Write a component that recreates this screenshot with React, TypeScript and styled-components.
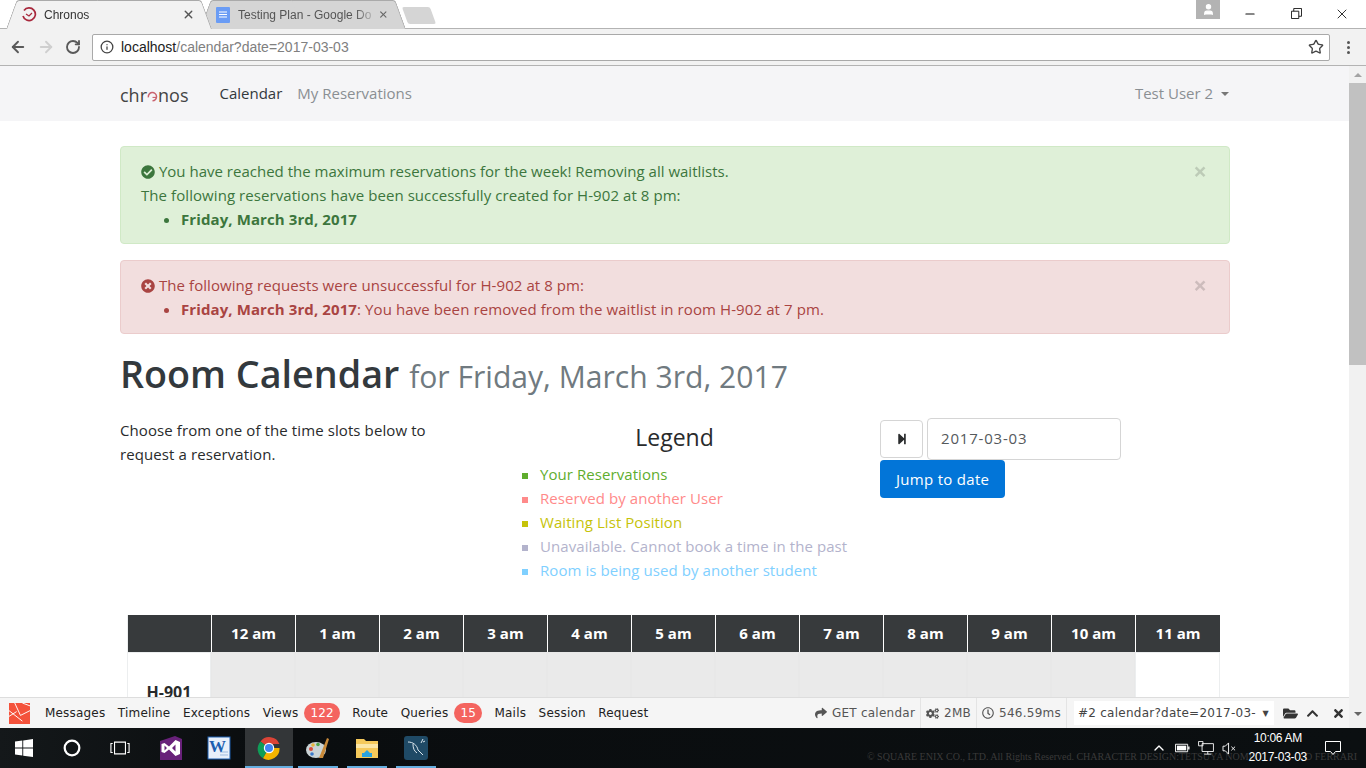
import styled, { createGlobalStyle } from 'styled-components';
import {
  ArrowLeft,
  ArrowRight,
  RotateCw,
  Info,
  Star,
  X,
  Minus,
  User,
  ChevronUp,
} from 'lucide-react';
import {
  FaCheckCircle,
  FaTimesCircle,
  FaStepForward,
  FaShare,
  FaCogs,
  FaRegClock,
  FaFolderOpen,
  FaChevronUp,
  FaTimes,
} from 'react-icons/fa';

const Global = createGlobalStyle`
  html, body { margin: 0; padding: 0; height: 100%; overflow: hidden; }
  body { font-family: "Open Sans", sans-serif; color: #292b2c; background: #fff; }
  * { box-sizing: border-box; }
`;

const hours = ['12 am', '1 am', '2 am', '3 am', '4 am', '5 am', '6 am', '7 am', '8 am', '9 am', '10 am', '11 am'];
const legend = [
  { label: 'Your Reservations', color: '#5fad2e' },
  { label: 'Reserved by another User', color: '#ff8a8a' },
  { label: 'Waiting List Position', color: '#c6c30a' },
  { label: 'Unavailable. Cannot book a time in the past', color: '#b3b3cc' },
  { label: 'Room is being used by another student', color: '#80d0ff' },
];

const App = () => (
  <Screen>
    <Global />
    <TabStrip>
      <Tab $active>
        <TabIcon viewBox="0 0 16 16">
          <path d="M3 3.500A6.300 6.300 0 1 1 2 9" fill="none" stroke="#a8283c" strokeWidth="1.700" />
          <path d="M5 7l3 2 3-3" fill="none" stroke="#a8283c" strokeWidth="1.200" />
        </TabIcon>
        <TabTitle>Chronos</TabTitle>
        <X size={13} color="#555" strokeWidth={2.5} />
      </Tab>
      <Tab>
        <TabIcon viewBox="0 0 16 16">
          <rect x="1" y="0" width="14" height="16" rx="1" fill="#6a9cf5" />
          <path d="M4 5h8M4 7.500h8M4 10h8" stroke="#fff" />
        </TabIcon>
        <TabTitle $dim>Testing Plan - Google Do</TabTitle>
        <X size={13} color="#666" strokeWidth={2.5} />
      </Tab>
      <NewTab />
      <WindowControls>
        <Profile><User size={13} color="#fff" fill="#fff" /></Profile>
        <WindowButton><Minus size={14} color="#111" /></WindowButton>
        <WindowButton><RestoreIcon viewBox="0 0 12 12"><path d="M.500 3.500h8v8h-8zM3 3.500V.500h8.500V9H8.500" fill="none" stroke="#111" /></RestoreIcon></WindowButton>
        <WindowButton><X size={16} color="#111" strokeWidth={1.300} /></WindowButton>
      </WindowControls>
    </TabStrip>
    <Toolbar>
      <ArrowLeft size={18} color="#5a5a5a" strokeWidth={2.500} />
      <ArrowRight size={18} color="#cfcfcf" strokeWidth={2.500} />
      <RotateCw size={16} color="#5a5a5a" strokeWidth={2.800} />
      <Omnibox>
        <Info size={14} color="#444" strokeWidth={2.200} />
        <Url><b>localhost</b>/calendar?date=2017-03-03</Url>
        <Star size={16} color="#444" strokeWidth={2} />
      </Omnibox>
      <MenuDots><i /><i /><i /></MenuDots>
    </Toolbar>
    <Viewport>
      <Page>
        <Navbar>
          <Logo>chr<LogoO viewBox="0 0 12 12"><path d="M1.500 7A4.500 4.500 0 1 1 6 10.700" fill="none" stroke="#c9626f" strokeWidth="1.600" /><path d="M6 7h4" stroke="#c9626f" strokeWidth="1.200" /></LogoO>nos</Logo>
          <NavLink $active>Calendar</NavLink>
          <NavLink>My Reservations</NavLink>
          <UserMenu>Test User 2 <Caret /></UserMenu>
        </Navbar>
        <Container>
          <Alert $kind="success">
            <AlertClose>×</AlertClose>
            <AlertLine><FaCheckCircle size={14} /> You have reached the maximum reservations for the week! Removing all waitlists.</AlertLine>
            <AlertLine $wide>The following reservations have been successfully created for H-902 at 8 pm:</AlertLine>
            <AlertList><li><b>Friday, March 3rd, 2017</b></li></AlertList>
          </Alert>
          <Alert $kind="danger">
            <AlertClose>×</AlertClose>
            <AlertLine $wide><FaTimesCircle size={14} /> The following requests were unsuccessful for H-902 at 8 pm:</AlertLine>
            <AlertList><li><b>Friday, March 3rd, 2017</b>: You have been removed from the waitlist in room H-902 at 7 pm.</li></AlertList>
          </Alert>
          <Heading>Room Calendar <small>for Friday, March 3rd, 2017</small></Heading>
          <Intro>
            <IntroText>Choose from one of the time slots below to request a reservation.</IntroText>
            <LegendBox>
              <LegendTitle>Legend</LegendTitle>
              {legend.map(item => (
                <LegendRow key={item.label} $color={item.color}>{item.label}</LegendRow>
              ))}
            </LegendBox>
            <DateBox>
              <DateRow>
                <IconButton><FaStepForward size={12} color="#292b2c" /></IconButton>
                <DateInput>2017-03-03</DateInput>
              </DateRow>
              <JumpButton>Jump to date</JumpButton>
            </DateBox>
          </Intro>
          <Table>
            <HeadCell />
            {hours.map(h => <HeadCell key={h}>{h}</HeadCell>)}
            <RoomCell>H-901</RoomCell>
            {hours.map(h => <SlotCell key={h} $free={h === '11 am'} />)}
          </Table>
        </Container>
      </Page>
      <ScrollBar>
        <ScrollArrow />
        <ScrollThumb />
        <ScrollArrow $down />
      </ScrollBar>
      <DebugBar>
        <DebugLogo viewBox="0 0 22 22">
          <rect x="0" y="0" width="22" height="22" fill="#f4523b" />
          <path d="M0 8l14 11M6 0l6 13 10-5M0 14l8-5M14 0l8 3" stroke="#fff" strokeWidth="1" fill="none" />
        </DebugLogo>
        <DebugItem>Messages</DebugItem>
        <DebugItem>Timeline</DebugItem>
        <DebugItem>Exceptions</DebugItem>
        <DebugItem>Views <Badge>122</Badge></DebugItem>
        <DebugItem>Route</DebugItem>
        <DebugItem>Queries <Badge>15</Badge></DebugItem>
        <DebugItem>Mails</DebugItem>
        <DebugItem>Session</DebugItem>
        <DebugItem>Request</DebugItem>
        <DebugRight>
          <DebugStat><FaShare size={12} /> GET calendar</DebugStat>
          <DebugStat><FaCogs size={13} /> 2MB</DebugStat>
          <DebugStat><FaRegClock size={12} /> 546.59ms</DebugStat>
          <DebugSelect>#2 calendar?date=2017-03-<SelectArrow>▼</SelectArrow></DebugSelect>
          <DebugActions>
            <FaFolderOpen size={15} />
            <FaChevronUp size={13} />
            <FaTimes size={13} />
          </DebugActions>
        </DebugRight>
      </DebugBar>
    </Viewport>
    <Taskbar>
      <TaskIcon>
        <TaskSvg viewBox="0 0 16 16"><path d="M0 2.300l6.500-.9v6.200H0zM7.300 1.300L16 0v7.600H7.300zM0 8.400h6.500v6.200L0 13.700zM7.300 8.400H16V16l-8.700-1.200z" fill="#fff" /></TaskSvg>
      </TaskIcon>
      <TaskIcon>
        <TaskSvg viewBox="0 0 16 16"><circle cx="8" cy="8" r="6.500" fill="none" stroke="#fff" strokeWidth="2" /></TaskSvg>
      </TaskIcon>
      <TaskIcon>
        <TaskSvg $size={20} viewBox="0 0 22 16"><path d="M5 1.500h12v13H5zM3 3H1v10h2M19 3h2v10h-2" fill="none" stroke="#fff" strokeWidth="1.200" /></TaskSvg>
      </TaskIcon>
      <TaskIcon $offset={3}>
        <TaskSvg $size={24} viewBox="0 0 22 24">
          <path d="M0 5l15-5 7 3v21H0z" fill="#68217a" />
          <path d="M1.500 8l3-1 4.500 3.500L15.500 4 20 6v12l-4.500 2L9 13.500 4.500 17l-3-1zM4.500 9.500v5L7 12zM15.500 8.500L12 12l3.500 3.500z" fill="#fff" fillRule="evenodd" />
        </TaskSvg>
      </TaskIcon>
      <TaskIcon>
        <TaskSvg $size={24} viewBox="0 0 24 24">
          <rect x="1" y="1" width="22" height="22" fill="#e8f0fa" stroke="#1c5fb0" />
          <path d="M13 16h8M13 19h8" stroke="#9fbbdf" />
          <text x="2" y="16" fontFamily="Liberation Serif, serif" fontSize="17" fontWeight="700" fill="#1c5fb0">W</text>
        </TaskSvg>
      </TaskIcon>
      <TaskIcon $offset={2} $active $running>
        <TaskSvg $size={24} viewBox="0 0 24 24">
          <path d="M12 12L3.500 5.500A11 11 0 0 1 22.500 8H12z" fill="#db4437" />
          <path d="M12 12l-6 10.300A11 11 0 0 1 3.500 5.500z" fill="#0f9d58" />
          <path d="M12 12h10.500A11 11 0 0 1 6 22.300z" fill="#f4b400" />
          <circle cx="12" cy="12" r="5.200" fill="#fff" />
          <circle cx="12" cy="12" r="4" fill="#4285f4" />
        </TaskSvg>
      </TaskIcon>
      <TaskIcon $offset={1} $running>
        <TaskSvg $size={26} viewBox="0 0 26 26">
          <ellipse cx="11" cy="15" rx="10" ry="8" fill="#c9d3d6" />
          <circle cx="6" cy="14" r="2" fill="#d64b3a" />
          <circle cx="8" cy="10" r="1.800" fill="#e8b53a" />
          <circle cx="13" cy="9.500" r="1.800" fill="#4fa34a" />
          <circle cx="7" cy="19" r="1.800" fill="#3a78c9" />
          <path d="M14 23L22 3l2 1-6 19z" fill="#c98a3a" />
        </TaskSvg>
      </TaskIcon>
      <TaskIcon $offset={1} $running>
        <TaskSvg $size={24} viewBox="0 0 24 24">
          <path d="M1 3h8l2 2h12v17H1z" fill="#f5c95b" />
          <path d="M1 8h22v4H1z" fill="#fbe6a6" />
          <path d="M7 21v-4h10v4z" fill="#29a3e0" />
          <path d="M9 17l3-3 3 3z" fill="#29a3e0" />
        </TaskSvg>
      </TaskIcon>
      <TaskIcon $offset={1} $running>
        <TaskSvg $size={24} viewBox="0 0 24 24">
          <rect x="0" y="0" width="24" height="24" rx="3" fill="#1f4a66" />
          <path d="M4 6c5 0 9 3 10 8l5 5M9 8c0 4 1 7 4 9M19 3l-2 4M21 5l-2 1" fill="none" stroke="#dbe7ee" strokeWidth="1" />
        </TaskSvg>
      </TaskIcon>
      <Wallpaper>
        <span>© SQUARE ENIX CO., LTD. All Rights Reserved. CHARACTER DESIGN:TETSUYA NOMU</span>
        <span>O FERRARI</span>
      </Wallpaper>
      <Tray>
        <ChevronUp size={16} color="#fff" />
        <BatteryIcon viewBox="0 0 16 10"><path d="M.500 1h13v8H.500z" fill="none" stroke="#fff" /><path d="M2 2.500h10v5H2z" fill="#fff" /><path d="M14 3.500h1.500v3H14z" fill="#fff" /></BatteryIcon>
        <NetworkIcon viewBox="0 0 18 16"><path d="M4.500 3h13v9h-13zM11 12v3M7 15h8M.500.500h5v5h-5z" fill="#0b0e10" stroke="#fff" /></NetworkIcon>
        <VolumeIcon viewBox="0 0 16 14"><path d="M1 4.500h2.500L7 1v12L3.500 9.500H1zM10 5l4 4M14 5l-4 4" fill="none" stroke="#fff" /></VolumeIcon>
        <Clock>10:06 AM<br />2017-03-03</Clock>
        <NotifyIcon viewBox="0 0 16 15"><path d="M.500.500h15v10h-5l-2.500 3-2.500-3h-5z" fill="none" stroke="#fff" /></NotifyIcon>
      </Tray>
    </Taskbar>
  </Screen>
);

const Screen = styled.div`
  width: 1366px;
  height: 768px;
  display: flex;
  flex-direction: column;
  overflow: hidden;
`;

const TabStrip = styled.div`
  height: 29px;
  flex: none;
  background: #fff;
  border-bottom: 1px solid #b3b3b3;
  display: flex;
  padding-left: 6px;
`;

const Tab = styled.div<{ $active?: boolean }>`
  position: relative;
  width: 206px;
  height: 29px;
  margin-right: -12px;
  display: flex;
  align-items: center;
  gap: 7px;
  padding: 0 17px 0 15px;
  z-index: ${p => (p.$active ? 2 : 1)};
  &::before,
  &::after {
    content: '';
    position: absolute;
    top: 0;
    bottom: 0;
    width: 50%;
    z-index: -1;
    background: ${p => (p.$active ? '#f2f2f2' : '#d5d5d5')};
    border: 1px solid #aaaaaa;
    border-bottom: none;
  }
  &::before {
    left: 0;
    border-right: none;
    border-radius: 3px 0 0 0;
    transform: skewX(-20deg);
    transform-origin: bottom left;
  }
  &::after {
    right: 0;
    border-left: none;
    border-radius: 0 3px 0 0;
    transform: skewX(20deg);
    transform-origin: bottom right;
  }
`;

const TabIcon = styled.svg`
  width: 16px;
  height: 16px;
  flex: none;
`;

const TabTitle = styled.span<{ $dim?: boolean }>`
  flex: 1;
  font: 12px "Liberation Sans", sans-serif;
  color: ${p => (p.$dim ? '#555' : '#333')};
  white-space: nowrap;
  mask-image: linear-gradient(90deg, #000 88%, rgba(0, 0, 0, 0.3));
`;

const NewTab = styled.div`
  width: 28px;
  height: 17px;
  margin: 7px 0 0 11px;
  background: #d5d5d5;
  border-radius: 2px;
  transform: skewX(20deg);
`;

const WindowControls = styled.div`
  margin-left: auto;
  padding-right: 1px;
  display: flex;
  align-items: flex-start;
`;

const Profile = styled.div`
  width: 24px;
  height: 19px;
  margin-right: 7px;
  background: #b3b3b3;
  display: flex;
  align-items: center;
  justify-content: center;
`;

const WindowButton = styled.div`
  width: 46px;
  height: 27px;
  display: flex;
  align-items: center;
  justify-content: center;
`;

const RestoreIcon = styled.svg`
  width: 11px;
  height: 11px;
`;

const Toolbar = styled.div`
  height: 37px;
  flex: none;
  background: #f2f2f2;
  border-bottom: 1px solid #b3b3b3;
  display: flex;
  align-items: center;
  gap: 10px;
  padding: 0 9px;
`;

const Omnibox = styled.div`
  width: 1238px;
  height: 27px;
  margin-left: 1px;
  background: #fff;
  border: 1px solid #a9a9a9;
  border-radius: 2px;
  display: flex;
  align-items: center;
  gap: 7px;
  padding: 0 5px 0 7px;
`;

const Url = styled.span`
  flex: 1;
  font: 14px "Liberation Sans", sans-serif;
  color: #808080;
  b { font-weight: 400; color: #222; }
`;

const MenuDots = styled.div`
  display: flex;
  flex-direction: column;
  gap: 2px;
  margin-left: 7px;
  i { width: 3px; height: 3px; border-radius: 50%; background: #555; }
`;

const Viewport = styled.div`
  flex: 1;
  min-height: 0;
  position: relative;
  display: flex;
`;

const Page = styled.div`
  flex: 1;
  min-width: 0;
  overflow: hidden;
`;

const Navbar = styled.nav`
  height: 55px;
  background: #f5f5f7;
  display: flex;
  align-items: center;
  padding: 0 120px 2px 120px;
  gap: 15px;
`;

const Logo = styled.div`
  display: flex;
  align-items: center;
  font: 18px "Open Sans", sans-serif;
  color: #444;
  margin: 5px 16px 0 0;
`;

const LogoO = styled.svg`
  width: 11px;
  height: 11px;
  margin: 3px 0 0;
`;

const NavLink = styled.span<{ $active?: boolean }>`
  font-size: 15px;
  color: ${p => (p.$active ? '#33393d' : '#8a8f93')};
`;

const UserMenu = styled.span`
  margin-left: auto;
  font-size: 15px;
  color: #8a8f93;
`;

const Caret = styled.i`
  display: inline-block;
  margin-left: 4px;
  vertical-align: middle;
  border-top: 4px solid #777;
  border-left: 4px solid transparent;
  border-right: 4px solid transparent;
`;

const Container = styled.div`
  width: 1110px;
  margin-left: 120px;
  padding-top: 25px;
`;

const Alert = styled.div<{ $kind: 'success' | 'danger' }>`
  position: relative;
  padding: 12px 20px;
  margin-bottom: 16px;
  font-size: 15px;
  line-height: 24px;
  border-radius: 4px;
  border: 1px solid ${p => (p.$kind === 'success' ? '#d0e9c6' : '#ebcccc')};
  background: ${p => (p.$kind === 'success' ? '#dff0d8' : '#f2dede')};
  color: ${p => (p.$kind === 'success' ? '#3c763d' : '#a94442')};
`;

const AlertClose = styled.span`
  position: absolute;
  right: 22px;
  top: 12px;
  font-size: 24px;
  font-weight: 700;
  color: #000;
  opacity: 0.15;
`;

const AlertLine = styled.div<{ $wide?: boolean }>`
  letter-spacing: ${p => (p.$wide ? '0.07px' : '0.01px')};
  svg { vertical-align: -2px; }
`;

const AlertList = styled.ul`
  margin: 0;
  padding-left: 40px;
  letter-spacing: 0.1px;
`;

const Heading = styled.h1`
  margin: 15px 0 17px;
  font-size: 37.7px;
  font-weight: 600;
  line-height: 48px;
  color: #33393d;
  small { font-size: 30.1px; font-weight: 400; color: #707a80; }
`;

const Intro = styled.div`
  display: flex;
`;

const IntroText = styled.p`
  width: 340px;
  margin: 0;
  font-size: 15px;
  line-height: 24px;
  letter-spacing: 0.1px;
`;

const LegendBox = styled.div`
  width: 420px;
  padding: 4px 53px 0 62px;
`;

const LegendTitle = styled.div`
  font-size: 23px;
  line-height: 30px;
  text-align: center;
  margin-bottom: 10px;
`;

const LegendRow = styled.div<{ $color: string }>`
  font-size: 15px;
  line-height: 24px;
  letter-spacing: 0.07px;
  white-space: nowrap;
  color: ${p => p.$color};
  &::before {
    content: '';
    display: inline-block;
    width: 6px;
    height: 6px;
    margin-right: 12px;
    vertical-align: middle;
    background: ${p => p.$color};
  }
`;

const DateBox = styled.div``;

const DateRow = styled.div`
  display: flex;
  gap: 4px;
`;

const IconButton = styled.div`
  width: 43px;
  height: 38px;
  margin-top: 2px;
  border: 1px solid #d5d5d5;
  border-radius: 4px;
  display: flex;
  align-items: center;
  justify-content: center;
`;

const DateInput = styled.div`
  width: 194px;
  height: 42px;
  border: 1px solid #d5d5d5;
  border-radius: 4px;
  padding: 9px 13px;
  font-size: 15px;
  letter-spacing: 0.8px;
  color: #55595c;
`;

const JumpButton = styled.div`
  display: inline-block;
  background: #0275d8;
  color: #fff;
  font-size: 15px;
  line-height: 20px;
  letter-spacing: 0.3px;
  padding: 9px 16px;
  border-radius: 4px;
`;

const Table = styled.div`
  margin: 33px 0 0 7px;
  display: grid;
  grid-template-columns: repeat(12, 84px) 85px;
  width: 1093px;
`;

const HeadCell = styled.div`
  height: 37px;
  padding-bottom: 1px;
  background: #373a3c;
  color: #fff;
  font-size: 15px;
  font-weight: 700;
  display: flex;
  align-items: center;
  justify-content: center;
  border-left: 1px solid #fff;
  &:first-child { border-left-color: #eceeef; }
`;

const RoomCell = styled.div`
  height: 80px;
  font-size: 16px;
  font-weight: 700;
  padding-top: 28px;
  text-align: center;
  border: 1px solid #eceeef;
`;

const SlotCell = styled.div<{ $free?: boolean }>`
  height: 80px;
  background: ${p => (p.$free ? '#fff' : '#eaeaea')};
  border: 1px solid ${p => (p.$free ? '#eceeef' : '#e8e8e8')};
`;

const ScrollBar = styled.div`
  width: 17px;
  flex: none;
  background: #f1f1f1;
  display: flex;
  flex-direction: column;
`;

const ScrollArrow = styled.div<{ $down?: boolean }>`
  height: 17px;
  flex: none;
  margin-top: ${p => (p.$down ? 'auto' : '0')};
  margin-bottom: ${p => (p.$down ? '6px' : '0')};
  display: flex;
  align-items: center;
  justify-content: center;
  &::before {
    content: '';
    border-left: 4px solid transparent;
    border-right: 4px solid transparent;
    ${p => (p.$down ? 'border-top: 4px solid #666;' : 'border-bottom: 4px solid #a3a3a3;')}
  }
`;

const ScrollThumb = styled.div`
  height: 282px;
  background: #c1c1c1;
`;

const DebugBar = styled.div`
  position: absolute;
  left: 0;
  width: 1349px;
  bottom: 0;
  height: 31px;
  background: #f5f5f5;
  border-top: 1px solid #ddd;
  display: flex;
  align-items: center;
  gap: 12.45px;
  padding-left: 9px;
  font: 12px "DejaVu Sans", sans-serif;
  letter-spacing: 0.2px;
`;

const DebugLogo = styled.svg`
  width: 21px;
  height: 21px;
  margin-right: 2.5px;
`;

const DebugItem = styled.span`
  color: #222;
`;

const Badge = styled.span`
  display: inline-block;
  background: #f4645f;
  color: #fff;
  border-radius: 11px;
  padding: 3px 6px;
  margin-left: 2px;
`;

const DebugRight = styled.div`
  margin-left: auto;
  height: 100%;
  display: flex;
  align-items: center;
  letter-spacing: 0.25px;
`;

const DebugStat = styled.span`
  display: flex;
  align-items: center;
  gap: 5px;
  height: 100%;
  padding: 0 5px;
  color: #555;
  border-right: 1px solid #e4e4e4;
`;

const DebugSelect = styled.span`
  width: 200px;
  display: flex;
  justify-content: space-between;
  align-items: center;
  background: #fff;
  padding: 5px 5px 5px 4px;
  margin-left: 7px;
  white-space: nowrap;
  color: #444;
`;

const SelectArrow = styled.span`
  font-size: 8px;
`;

const DebugActions = styled.div`
  display: flex;
  align-items: center;
  gap: 8px;
  padding: 0 4px 0 9px;
  color: #333;
  svg:last-child { margin-left: 5px; }
`;

const Taskbar = styled.div`
  height: 40px;
  flex: none;
  background: linear-gradient(90deg, #14181a 0, #0a0d0f 260px, #0b0f11 100%);
  display: flex;
  position: relative;
`;

const TaskIcon = styled.div<{ $offset?: number; $active?: boolean; $running?: boolean }>`
  position: relative;
  width: 48px;
  height: 40px;
  margin-left: ${p => p.$offset ?? 0}px;
  display: flex;
  align-items: center;
  justify-content: center;
  background: ${p => (p.$active ? '#333638' : 'transparent')};
  &::after {
    content: '';
    display: ${p => (p.$running ? 'block' : 'none')};
    position: absolute;
    left: ${p => (p.$active ? 0 : 4)}px;
    right: ${p => (p.$active ? 0 : 4)}px;
    bottom: 0;
    height: 2px;
    background: #65aee0;
  }
`;

const TaskSvg = styled.svg<{ $size?: number }>`
  width: ${p => p.$size ?? 18}px;
  height: ${p => p.$size ?? 18}px;
`;

const Wallpaper = styled.div`
  position: absolute;
  left: 867px;
  width: 490px;
  bottom: 6px;
  display: flex;
  justify-content: space-between;
  font: 10px "Liberation Serif", serif;
  color: #3a3a3a;
  white-space: nowrap;
`;

const Tray = styled.div`
  position: absolute;
  right: 0;
  top: 0;
  bottom: 0;
  display: flex;
  align-items: center;
  gap: 8px;
  padding-right: 25px;
`;

const BatteryIcon = styled.svg`
  width: 15px;
  height: 10px;
`;

const NetworkIcon = styled.svg`
  width: 16px;
  height: 14px;
`;

const VolumeIcon = styled.svg`
  width: 15px;
  height: 13px;
`;

const Clock = styled.div`
  font: 12px/19px "Liberation Sans", sans-serif;
  letter-spacing: -0.3px;
  color: #fff;
  text-align: center;
  margin: 0 10px 0 4px;
`;

const NotifyIcon = styled.svg`
  width: 16px;
  height: 15px;
`;

export default App;
